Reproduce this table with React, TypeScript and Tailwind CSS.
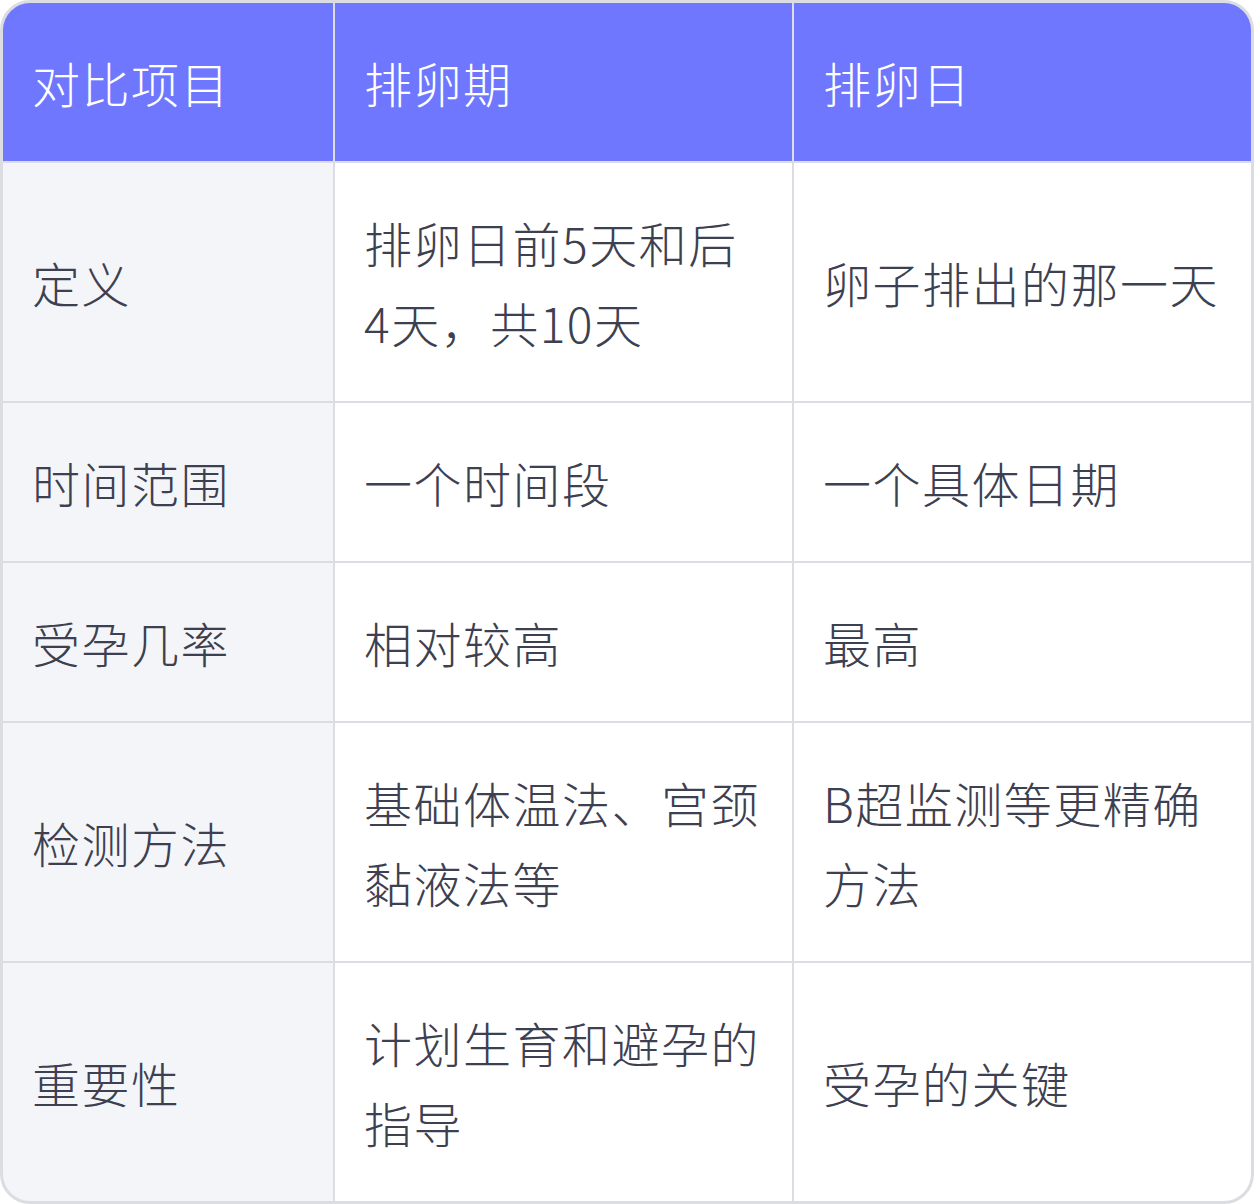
const HEADERS = ['对比项目', '排卵期', '排卵日'];

const ROWS: [string, string, string][] = [
  ['定义', '排卵日前5天和后4天，共10天', '卵子排出的那一天'],
  ['时间范围', '一个时间段', '一个具体日期'],
  ['受孕几率', '相对较高', '最高'],
  ['检测方法', '基础体温法、宫颈黏液法等', 'B超监测等更精确方法'],
  ['重要性', '计划生育和避孕的指导', '受孕的关键'],
];

export default function App(): React.ReactElement {
  return (
    <div className="w-[1254px] h-[1204px] bg-white">
      <div
        className="grid grid-cols-[330px_457px_457px] gap-[2px] overflow-hidden rounded-[30px] border-[3px] border-[#dcdde2] bg-[#dcdde2] text-[48px] font-light leading-[80px] tracking-[1.5px]"
        style={{
          fontFamily:
            '"Noto Sans CJK SC Light", "Noto Sans CJK SC DemiLight", "Noto Sans CJK SC", "Noto Sans", sans-serif',
        }}
      >
        {HEADERS.map((h) => (
          <div key={h} className="bg-[#7077ff] pl-[29px] pr-[28px] py-[39px] text-white">
            {h}
          </div>
        ))}
        {ROWS.map((row) =>
          row.map((cell, i) => (
            <div
              key={row[0] + i}
              className={`flex items-center pl-[29px] pr-[28px] py-[39px] text-[#3d4050] ${i === 0 ? 'bg-[#f4f5f9]' : 'bg-white'}`}
            >
              <span>{cell}</span>
            </div>
          ))
        )}
      </div>
    </div>
  );
}
